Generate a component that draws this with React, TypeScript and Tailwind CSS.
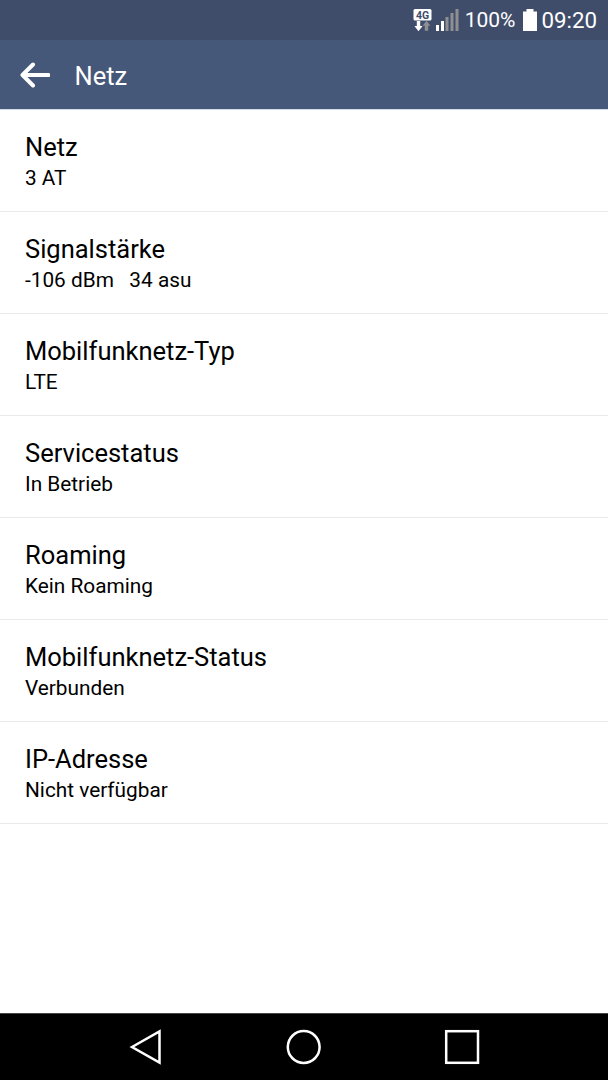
const rows: [string, string][] = [
  ["Netz", "3 AT"],
  ["Signalstärke", "-106 dBm   34 asu"],
  ["Mobilfunknetz-Typ", "LTE"],
  ["Servicestatus", "In Betrieb"],
  ["Roaming", "Kein Roaming"],
  ["Mobilfunknetz-Status", "Verbunden"],
  ["IP-Adresse", "Nicht verfügbar"],
];

export default function App() {
  return (
    <div className="flex h-[1080px] w-[608px] flex-col overflow-hidden bg-white font-['Roboto',sans-serif] text-black">
      <div className="flex h-10 shrink-0 items-center justify-end bg-[#3f4d6b] pr-[11px] text-[22.3px] text-white">
        <svg width="46" height="24" viewBox="413 8 46 24" className="mr-[6px]">
          <rect x="413.500" y="9" width="18" height="11.500" rx="1.500" fill="#fff" />
          <text x="422.500" y="18.600" textAnchor="middle" fontSize="10.500" fontWeight="700" fill="#3f4d6b">4G</text>
          <path d="M416.800 21h3.400v5h2.400l-4.100 5.300-4.100-5.300h2.400z" fill="#fff" />
          <path d="M424.800 30.700h3.400v-5h2.200l-3.900-5-3.900 5h2.200z" fill="#8f8f92" />
          <path d="M436 25h3v6h-3zM441 21h3v10h-3z" fill="#fff" />
          <path d="M445.500 17h3v14h-3zM450.500 13h3v18h-3zM455.500 9h3v22h-3z" fill="#8f8f92" />
        </svg>
        <span className="pt-px text-[21px]">100%</span>
        <svg width="16" height="24" viewBox="0 0 16 24" className="ml-[7px] mr-[3px]">
          <path d="M4.500 1h7v2.500h3.500V23H1V3.500h3.500z" fill="#fff" />
        </svg>
        <span className="pt-0.5">09:20</span>
      </div>
      <header className="flex h-[70px] shrink-0 items-center border-b border-[#d3daea] bg-[#465879] pl-[19.5px] text-white">
        <svg width="30" height="26" viewBox="0 0 30 26">
          <path d="M28.500 13H3M13 2.500L2.500 13l10.500 10.500" fill="none" stroke="#fff" strokeWidth="4" strokeLinecap="round" strokeLinejoin="round" />
        </svg>
        <h1 className="ml-[25px] pt-[3px] text-[25.5px]">Netz</h1>
      </header>
      <main className="flex-1">
        {rows.map(([title, value]) => (
          <div key={title} className="flex h-[102px] flex-col border-b border-[#e9e9e9] pl-[25px] pt-[21px]">
            <div className="text-[25.5px] leading-8">{title}</div>
            <div className="whitespace-pre pt-px text-[20.8px] leading-7">{value}</div>
          </div>
        ))}
      </main>
      <nav className="flex h-[67px] shrink-0 border-t border-[#444] bg-black">
        <svg width="608" height="66" viewBox="0 1014 608 66" fill="none" stroke="#fff" strokeWidth="2.5">
          <path d="M132 1047l27.500-15.500v31z" />
          <circle cx="303.700" cy="1047" r="15.900" />
          <rect x="446.200" y="1031.200" width="31.800" height="31.600" />
        </svg>
      </nav>
    </div>
  );
}
